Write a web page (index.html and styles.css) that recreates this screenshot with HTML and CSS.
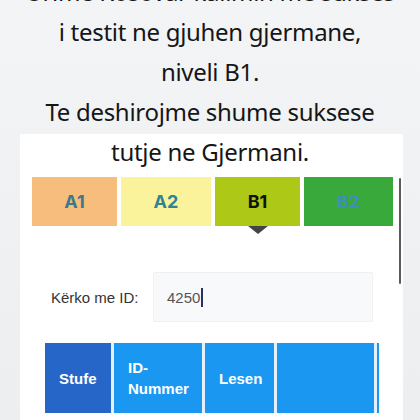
FILE: index.html
```html
<!DOCTYPE html>
<html>
<head>
<meta charset="utf-8">
<link rel="stylesheet" href="styles.css">
</head>
<body>
<div class="page">
  <div class="panel">
    <div class="scrollbar"></div>
    <div class="tabs">
      <div class="tab a1">A1</div>
      <div class="tab a2">A2</div>
      <div class="tab b1">B1</div>
      <div class="tab b2">B2</div>
    </div>
    <div class="search">
      <label class="search-label">Kërko me ID:</label>
      <div class="search-input"><span>4250</span><span class="caret"></span></div>
    </div>
    <div class="table-wrap">
      <div class="thead">
        <div class="th dark">Stufe</div>
        <div class="th">ID-<br>Nummer</div>
        <div class="th">Lesen</div>
        <div class="th"></div>
        <div class="th"></div>
      </div>
    </div>
  </div>
  <div class="caption">
    <p>Urime Kosovar kalimin me sukses</p>
    <p>i testit ne gjuhen gjermane,</p>
    <p>niveli B1.</p>
    <p>Te deshirojme shume suksese</p>
    <p>tutje ne Gjermani.</p>
  </div>
</div>
</body>
</html>
```
FILE: styles.css
```css
html, body {
  margin: 0;
  padding: 0;
}
body {
  width: 420px;
  height: 420px;
  overflow: hidden;
  background: linear-gradient(180deg, #f3f4f6 0%, #eceef0 100%);
  font-family: "Liberation Sans", Arial, sans-serif;
}
.page {
  position: relative;
  height: 420px;
  padding-top: 134px;
  box-sizing: border-box;
}
.caption {
  position: absolute;
  top: -28px;
  left: 0;
  width: 420px;
  text-align: center;
  font-family: "Noto Sans", sans-serif;
  font-size: 24px;
  letter-spacing: -0.3px;
  line-height: 40px;
  color: #161616;
}
.caption p {
  margin: 0;
}
.panel {
  position: relative;
  margin-left: 20px;
  width: 383px;
  height: 320px;
  background: #ffffff;
  padding-top: 43px;
  box-sizing: border-box;
}
.scrollbar {
  position: absolute;
  left: 379px;
  top: 44px;
  width: 2px;
  height: 106px;
  background: #5a5a5a;
  border-radius: 1px;
}
.tabs {
  display: grid;
  grid-template-columns: 85px 90px 85px 89px;
  column-gap: 4px;
  margin-left: 12px;
  height: 49px;
}
.tab {
  position: relative;
  display: flex;
  align-items: center;
  justify-content: center;
  font-family: Inter, "Open Sans", sans-serif;
  font-weight: 700;
  font-size: 18px;
}
.a1 { background: #f7bd7c; color: #3a7b8a; }
.a2 { background: #fbf29c; color: #2f8494; }
.b1 { background: #aec817; color: #111; }
.b2 { background: #3aa93b; color: #3d8fb8; }
.b1::after {
  content: "";
  position: absolute;
  left: 33px;
  top: 49px;
  border-top: 8px solid #444;
  border-left: 10px solid transparent;
  border-right: 10px solid transparent;
}
.search {
  display: flex;
  align-items: center;
  margin-top: 46px;
  margin-left: 31px;
}
.search-label {
  width: 102px;
  font-size: 15px;
  color: #333;
}
.search-input {
  width: 220px;
  height: 50px;
  box-sizing: border-box;
  background: #f8f9fa;
  border: 1px solid #eff0f2;
  border-radius: 2px;
  display: flex;
  align-items: center;
  padding-left: 13px;
  font-size: 15px;
  color: #555;
}
.caret {
  display: inline-block;
  width: 2px;
  height: 19px;
  background: #2a2f6a;
  margin-left: 1px;
}
.table-wrap {
  margin-top: 21px;
  margin-left: 25px;
  width: 334px;
  overflow: hidden;
}
.thead {
  display: grid;
  grid-template-columns: 66px 88px 69px 97px 40px;
  column-gap: 3px;
  height: 70px;
  width: 380px;
  background: #e4f0fb;
}
.th {
  background: #1a97f0;
  color: #fff;
  font-weight: 700;
  font-size: 15px;
  line-height: 21px;
  display: flex;
  align-items: center;
  padding-left: 14px;
}
.th.dark {
  background: #2566c8;
}
```
